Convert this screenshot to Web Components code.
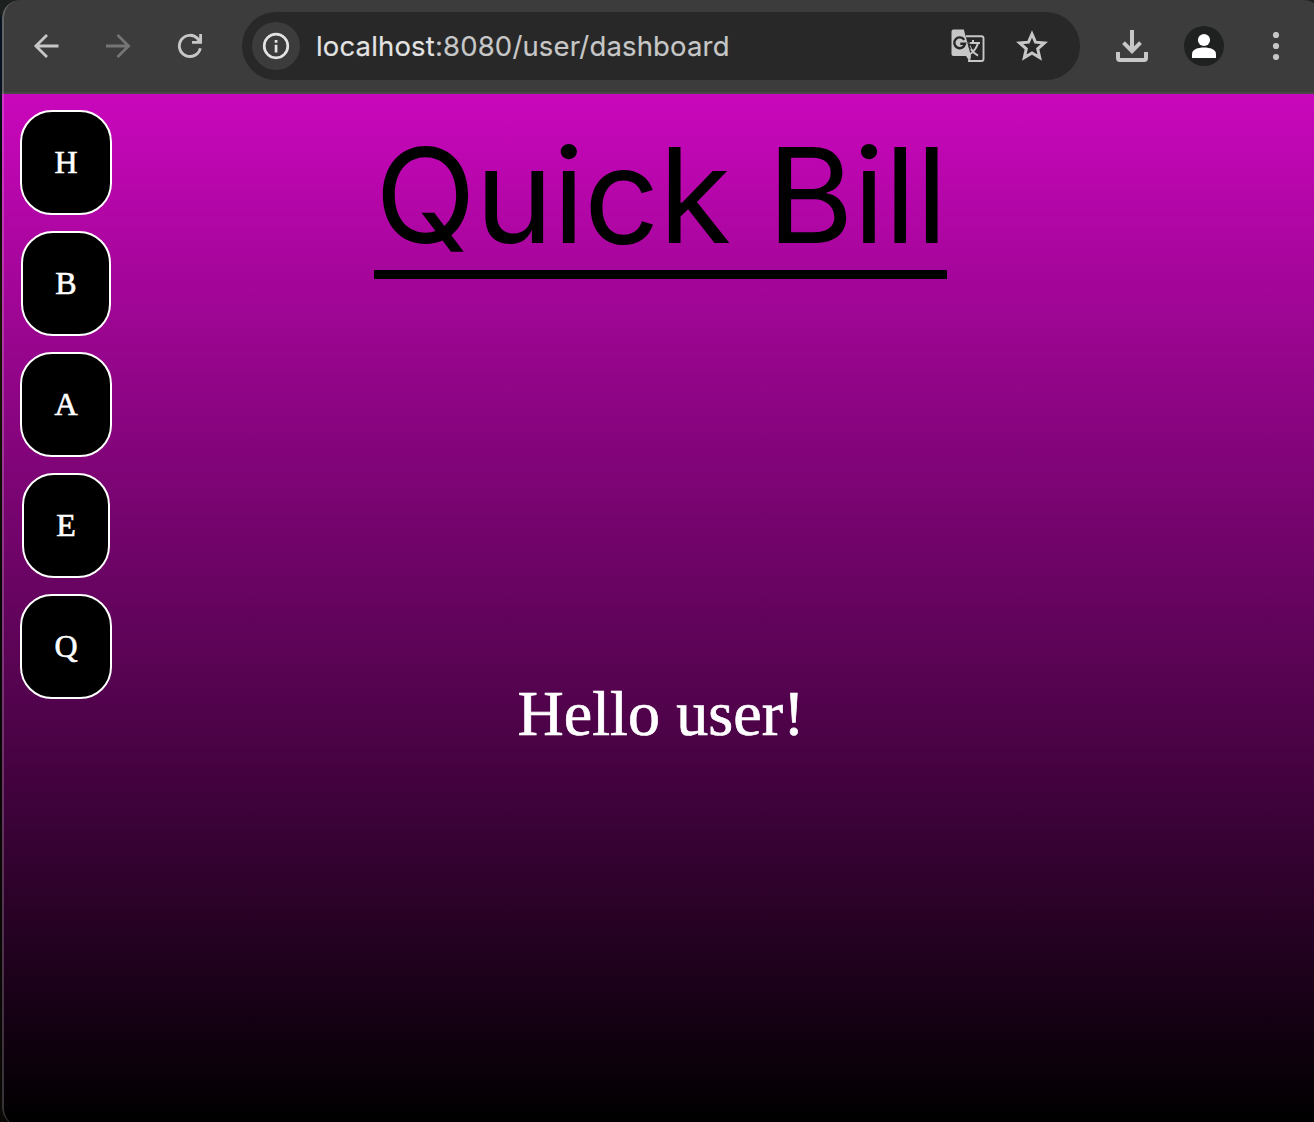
<!DOCTYPE html>
<html lang="en">
<head>
<meta charset="utf-8">
<title>Quick Bill</title>
<style>
html,body{margin:0;height:100%;overflow:hidden}
body{background:linear-gradient(#1c201f 0 12px,#071322 20px,#071322 90px,#060608 160px,#1a1206 320px,#080604 600px,#0a0804)}
</style>
</head>
<body>
<browser-window>
  <tool-bar slot="bar"></tool-bar>
  <bill-dashboard>
    <nav-key slot="nav">H</nav-key>
    <nav-key slot="nav">B</nav-key>
    <nav-key slot="nav">A</nav-key>
    <nav-key slot="nav">E</nav-key>
    <nav-key slot="nav">Q</nav-key>
    <span slot="title">Quick Bill</span>
    <span slot="greeting">Hello user!</span>
  </bill-dashboard>
</browser-window>
<script>
const define = (name, html) => customElements.define(name, class extends HTMLElement {
  constructor() {
    super();
    this.attachShadow({ mode: 'open' }).innerHTML = html;
  }
});

define('nav-key', `
<style>
:host{display:block;box-sizing:border-box;height:105px;padding:32px;border:2px solid #fff;border-radius:32px;background:#000;color:#fff;
font:32px/37px "Liberation Serif","Times New Roman",serif;-webkit-text-stroke:.6px #fff}
</style><slot></slot>`);

define('tool-bar', `
<style>
:host{display:flex;box-sizing:border-box;height:94px;padding:12px 26px 12px 16px;border-bottom:2px solid #464647;background:#3c3c3c;align-items:flex-start}
.b{display:flex;width:56px;height:68px;margin-right:16px;align-items:center;justify-content:center}
svg{display:block;flex:none}
.omni{display:flex;box-sizing:border-box;width:838px;height:68px;margin-left:8px;padding:0 32px 0 10px;border-radius:34px;background:#282828;align-items:center}
.info{display:flex;width:48px;height:48px;border-radius:50%;background:#3c3c3c;align-items:center;justify-content:center}
.url{margin-left:16px;flex:1;font:27.5px/34px Inter,sans-serif;color:#c7c7c7;white-space:nowrap;letter-spacing:.16px;-webkit-text-stroke:.15px}
.url b{font-weight:400;color:#e3e3e3}
.star{margin-left:31px}
.end{display:flex;height:68px;margin-left:36px;align-items:center}
.person{margin:0 46px 0 36px}
</style>
<div class="b"><svg width="26" height="26" viewBox="0 0 26 26" fill="none" stroke="#c7c7c7" stroke-width="2.800"><path d="M25.500 13H4M14 1.900 2.900 13 14 24.100"/></svg></div>
<div class="b"><svg width="26" height="26" viewBox="0 0 26 26" fill="none" stroke="#757575" stroke-width="2.800"><path d="M1 13h22M12.500 1.900 23.600 13 12.500 24.100"/></svg></div>
<div class="b"><svg width="26" height="26" viewBox="0 0 26 26"><path d="M23.300 15.200A10.600 10.600 0 1 1 20.800 5.800L23 8.200" fill="none" stroke="#c7c7c7" stroke-width="2.900"/><path d="M22.200 1H25v9.800H15V8h4.600l2.600-2.500z" fill="#c7c7c7"/></svg></div>
<div class="omni">
  <div class="info"><svg width="28" height="28" viewBox="0 0 28 28"><circle cx="14" cy="14" r="11.800" fill="none" stroke="#e3e3e3" stroke-width="2.700"/><path d="M12.700 12.700h2.700v7.700h-2.700zM12.700 8h2.700v2.700h-2.700z" fill="#e3e3e3"/></svg></div>
  <div class="url"><b>localhost</b>:8080/user/dashboard</div>
  <svg width="34" height="34" viewBox="0 0 34 34"><path d="M15 7.200h15.500a2 2 0 0 1 2 2V30a2 2 0 0 1-2 2H17" fill="none" stroke="#c7c7c7" stroke-width="1.900"/><path d="M2.500.500h10.300L20 27l-1 6-4-6H2.500a2 2 0 0 1-2-2V2.500a2 2 0 0 1 2-2z" fill="#c7c7c7"/><path d="M13.200 10.800A5.400 5.400 0 1 0 14 14.800H9.300" fill="none" stroke="#282828" stroke-width="2.400"/><path d="M16 14h13M22 11v3M18.500 16.800c1.500 4.200 4.500 7.400 8.500 9.800M27 14c-1.500 5.200-4.500 9-8.500 11.500" fill="none" stroke="#c7c7c7" stroke-width="2"/><path d="M16.300 14h2.800M17.800 17l1.800 3.200" stroke="#282828" stroke-width="1.500"/></svg>
  <svg class="star" width="32" height="32" viewBox="0 0 32 32" fill="none" stroke="#c7c7c7" stroke-width="3"><path d="m16 4 3.500 8.200 8.900.8-6.700 5.900 2 8.700-7.700-4.600-7.700 4.600 2-8.700L3.600 13l8.900-.8z"/></svg>
</div>
<div class="end">
  <svg width="32" height="32" viewBox="0 0 32 32" fill="none" stroke="#c7c7c7" stroke-width="4"><path d="M16 0v21M7.500 12.600l8.500 8.500 8.500-8.500M2 22v6.100q0 1.900 1.900 1.900h24.200q1.900 0 1.900-1.900V22"/></svg>
  <svg class="person" width="40" height="40" viewBox="0 0 40 40"><circle cx="20" cy="20" r="20" fill="#1f2120"/><circle cx="20" cy="14" r="6.100" fill="#fff"/><path d="M8 32v-4c0-4.500 6-6.500 12-6.500s12 2 12 6.500v4z" fill="#fff"/></svg>
  <svg width="12" height="28" viewBox="0 0 12 28" fill="#c7c7c7"><circle cx="6" cy="3" r="3.100"/><circle cx="6" cy="14" r="3.100"/><circle cx="6" cy="25" r="3.100"/></svg>
</div>`);

define('bill-dashboard', `
<style>
:host{display:grid;box-sizing:border-box;height:1028px;grid-template-columns:128px 1fr 132px;background:linear-gradient(#c907bc,#000)}
nav{display:flex;flex-direction:column;align-items:center;gap:16px;padding-top:16px}
main{display:flex;flex-direction:column;align-items:center;padding-top:21px}
.title{box-sizing:border-box;width:573px;height:164px;padding-left:2px;border-bottom:9px solid #000;display:flex;justify-content:center;white-space:nowrap;
font:132px/160px Inter,sans-serif;color:#000;letter-spacing:-.6px}
.greet{margin-top:398px;padding-left:2px;font:64px/74px "Liberation Serif","Times New Roman",serif;color:#fff;white-space:nowrap;letter-spacing:.1px;-webkit-text-stroke:.7px #fff}
</style>
<nav><slot name="nav"></slot></nav>
<main><div class="title"><slot name="title"></slot></div><div class="greet"><slot name="greeting"></slot></div></main>`);

define('browser-window', `
<style>
:host{display:block;box-sizing:border-box;width:1320px;height:1126px;margin-left:2px;border-radius:18px;overflow:hidden;position:relative;background:#000}
:host::after{content:"";position:absolute;inset:0;border-left:2px solid rgba(255,255,255,.2);border-radius:18px;pointer-events:none}
</style>
<slot name="bar"></slot><slot></slot>`);
</script>
</body>
</html>
